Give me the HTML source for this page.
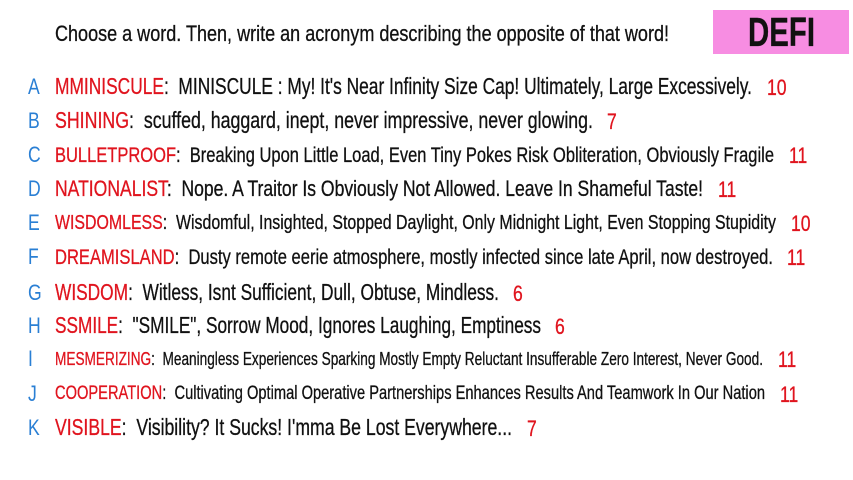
<!DOCTYPE html>
<html><head><meta charset="utf-8"><style>
html,body{margin:0;padding:0;background:#fff;width:853px;height:480px;overflow:hidden;position:relative}
body{font-family:"Liberation Sans Narrow","Liberation Sans",sans-serif;color:#111}
.l{position:absolute;white-space:nowrap;transform-origin:0 50%;line-height:1;-webkit-text-stroke:0.3px #111}
.l .r{-webkit-text-stroke:0.3px #e0141e}
.k{position:absolute;left:28px;color:#2a7fd4;font-size:22px;line-height:1;transform:scaleX(0.8);transform-origin:0 50%}
.r{color:#e0141e}
.n{position:absolute;color:#e0141e;line-height:1;font-size:22px;transform:scaleX(0.8);transform-origin:0 50%;-webkit-text-stroke:0.3px #e0141e;margin-top:2px}
#box{position:absolute;left:713px;top:10px;width:136px;height:44px;background:#f78de2}
#defi{position:absolute;left:748px;top:12px;font-size:41px;font-weight:bold;color:#111;line-height:1;transform-origin:0 50%}
</style></head><body>
<div id="box"></div><div class="l" id="defi" data-w="67">DEFI</div>
<div class="l" data-w="614" style="left:55px;top:23px;font-size:22px">Choose a word. Then, write an acronym describing the opposite of that word!</div>

<div class="k" style="top:76px">A</div>
<div class="l" data-w="697" style="left:55px;top:75px;font-size:23px"><span class="r">MMINISCULE</span>:&nbsp; MINISCULE : My! It's Near Infinity Size Cap! Ultimately, Large Excessively.</div>
<div class="n" style="left:767px;top:75px">10</div>

<div class="k" style="top:110px">B</div>
<div class="l" data-w="538" style="left:55px;top:109px;font-size:23px"><span class="r">SHINING</span>:&nbsp; scuffed, haggard, inept, never impressive, never glowing.</div>
<div class="n" style="left:607px;top:109px">7</div>

<div class="k" style="top:144px">C</div>
<div class="l" data-w="719" style="left:55px;top:145px;font-size:21px"><span class="r">BULLETPROOF</span>:&nbsp; Breaking Upon Little Load, Even Tiny Pokes Risk Obliteration, Obviously Fragile</div>
<div class="n" style="left:789px;top:143px">11</div>

<div class="k" style="top:178px">D</div>
<div class="l" data-w="648" style="left:55px;top:178px;font-size:22px"><span class="r">NATIONALIST</span>:&nbsp; Nope. A Traitor Is Obviously Not Allowed. Leave In Shameful Taste!</div>
<div class="n" style="left:718px;top:177px">11</div>

<div class="k" style="top:212px">E</div>
<div class="l" data-w="721" style="left:55px;top:213px;font-size:20px"><span class="r">WISDOMLESS</span>:&nbsp; Wisdomful, Insighted, Stopped Daylight, Only Midnight Light, Even Stopping Stupidity</div>
<div class="n" style="left:791px;top:211px">10</div>

<div class="k" style="top:246px">F</div>
<div class="l" data-w="718" style="left:55px;top:247px;font-size:21px"><span class="r">DREAMISLAND</span>:&nbsp; Dusty remote eerie atmosphere, mostly infected since late April, now destroyed.</div>
<div class="n" style="left:787px;top:245px">11</div>

<div class="k" style="top:282px">G</div>
<div class="l" data-w="444" style="left:55px;top:281px;font-size:23px"><span class="r">WISDOM</span>:&nbsp; Witless, Isnt Sufficient, Dull, Obtuse, Mindless.</div>
<div class="n" style="left:513px;top:281px">6</div>

<div class="k" style="top:315px">H</div>
<div class="l" data-w="486" style="left:55px;top:314px;font-size:23px"><span class="r">SSMILE</span>:&nbsp; "SMILE", Sorrow Mood, Ignores Laughing, Emptiness</div>
<div class="n" style="left:555px;top:314px">6</div>

<div class="k" style="top:348px">I</div>
<div class="l" data-w="708" style="left:55px;top:350px;font-size:18px"><span class="r">MESMERIZING</span>:&nbsp; Meaningless Experiences Sparking Mostly Empty Reluctant Insufferable Zero Interest, Never Good.</div>
<div class="n" style="left:778px;top:347px">11</div>

<div class="k" style="top:383px">J</div>
<div class="l" data-w="710" style="left:55px;top:384px;font-size:19px"><span class="r">COOPERATION</span>:&nbsp; Cultivating Optimal Operative Partnerships Enhances Results And Teamwork In Our Nation</div>
<div class="n" style="left:780px;top:382px">11</div>

<div class="k" style="top:417px">K</div>
<div class="l" data-w="457" style="left:55px;top:416px;font-size:23px"><span class="r">VISIBLE</span>:&nbsp; Visibility? It Sucks! I'mma Be Lost Everywhere...</div>
<div class="n" style="left:527px;top:416px">7</div>

<script>
document.querySelectorAll('.l').forEach(function(e){
  var w=+e.getAttribute('data-w');var a=e.getBoundingClientRect().width;
  if(a>0)e.style.transform='scaleX('+(w/a)+')';
});
</script>
</body></html>
